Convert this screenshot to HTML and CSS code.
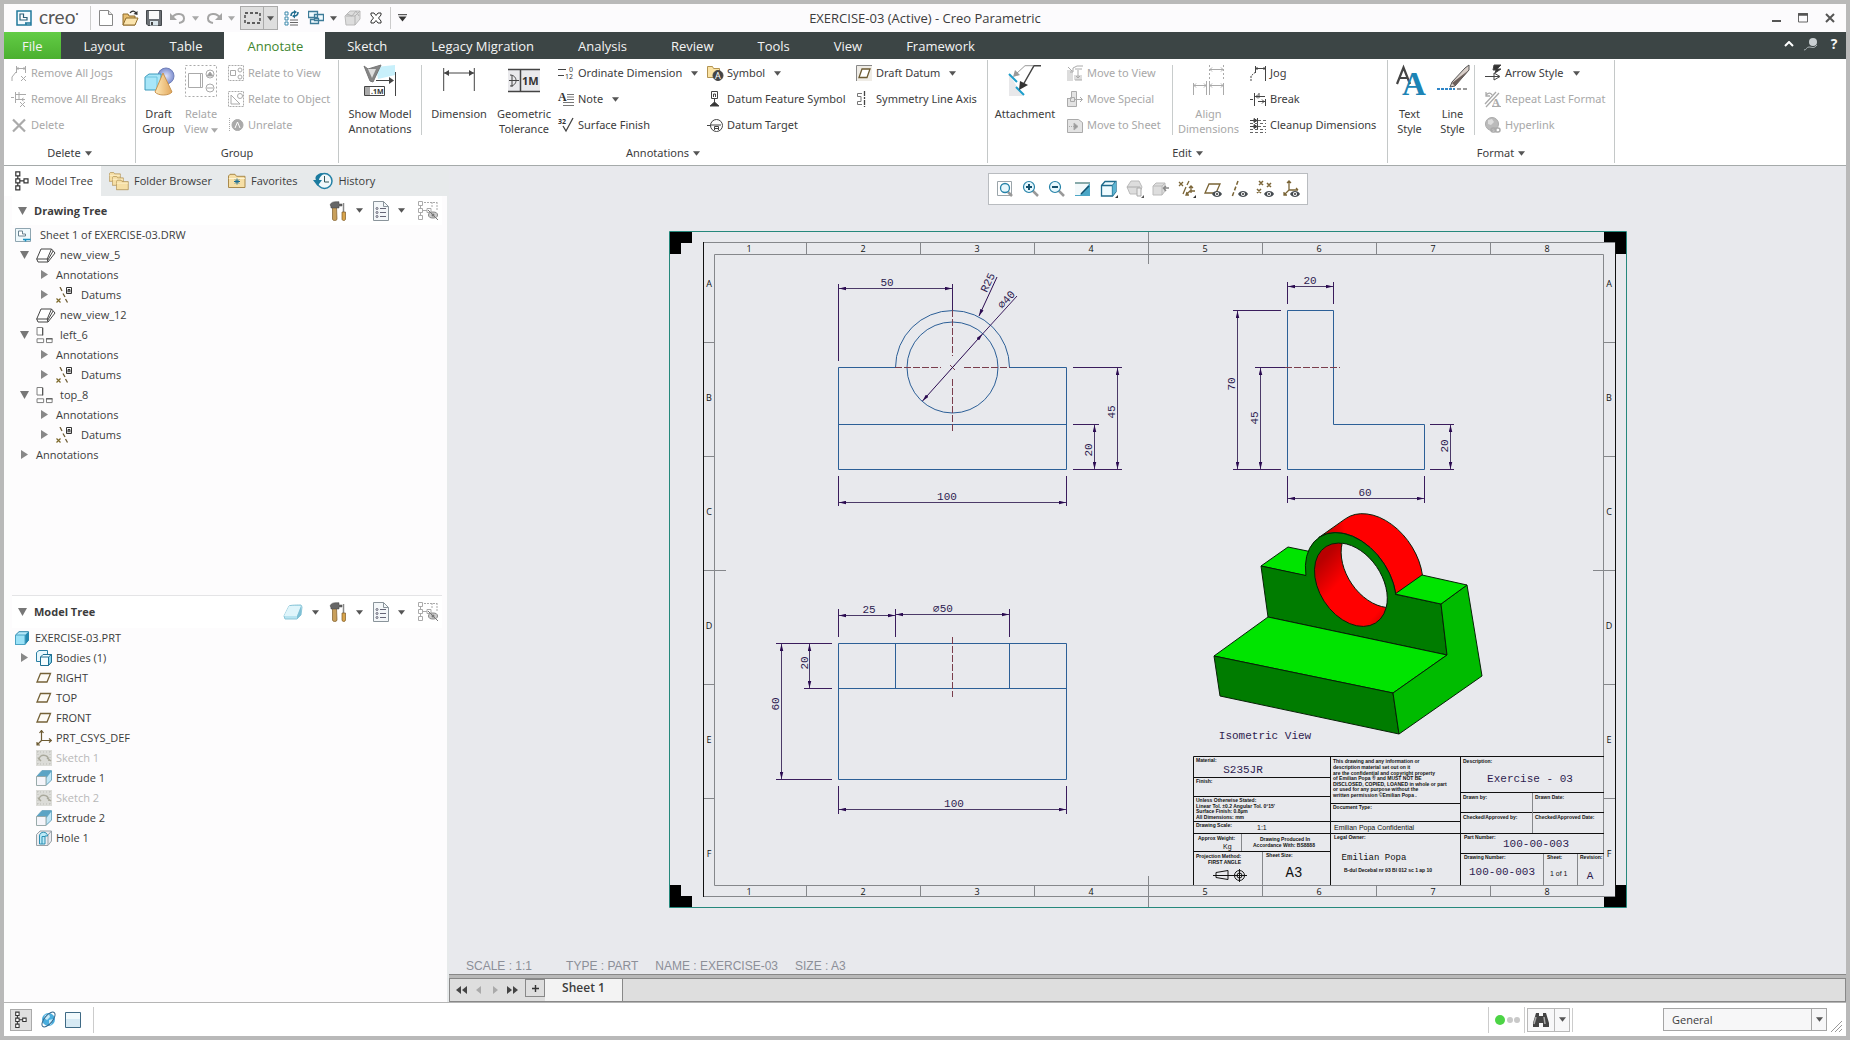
FILE: index.html
```html
<!DOCTYPE html>
<html lang="en">
<head>
    <meta charset="UTF-8">
    <title>EXERCISE-03 (Active) - Creo Parametric</title>
    <link rel="stylesheet" href="styles.css">
</head>
<body>
    <!-- shared icons -->
    <svg class="sprite" aria-hidden="true">
        <symbol id="caret" viewBox="0 0 8 5"><path d="M0 0h8L4 5z" fill="currentColor"/></symbol>
        <symbol id="tri-down" viewBox="0 0 10 8"><path d="M0 0h9L4.5 8z" fill="#777"/></symbol>
        <symbol id="tri-right" viewBox="0 0 10 10"><path d="M1 0v9l7-4.500z" fill="#888"/></symbol>
        <symbol id="sheet" viewBox="0 0 16 14"><path d="M.5.5h15v13H.5z" fill="#eef8fc" stroke="#8fa5b0"/><path d="M3.500 3v5h7V6h-3V3z" fill="#fff" stroke="#6a8290"/><path d="M8 11.500h7.500M10.500 11.500v2" stroke="#1b90c0" stroke-width="1.500"/></symbol>
        <symbol id="view3d" viewBox="0 0 20 16"><path d="M.7 11.500 5 1.500h10.500l3.500 4-7 9H2z" fill="#fff" stroke="#444" stroke-linejoin="round"/><path d="M.7 11.500h10.500l4.300-10M11.200 11.500l.8 3M11.600 13l5.500-9.500" fill="none" stroke="#444"/></symbol>
        <symbol id="view2d" viewBox="0 0 20 18"><path d="M.5.5h6v8h-6zM.5 12.500h7v4h-7zM10.500 12.500h6v4h-6z" fill="#fff" stroke="#777"/><path d="M6.500 1v8M10 12.500h7" stroke="#444"/></symbol>
        <symbol id="datums" viewBox="0 0 16 16"><path d="M4 0l2 4M7 6.500 9 10M9.500 12l2 3.500" stroke="#6d5b33" stroke-width="1.300"/><path d="M.5 11.500l4 4m0-4-4 4" stroke="#7d6a2c" stroke-width="1.200"/><path d="M10.500.5h5v6h-5zM12 5.500v-3h2v3M12 4h2" fill="#fff" stroke="#333"/></symbol>
        <symbol id="plane" viewBox="0 0 16 12"><path d="M4.500 1.500h10l-3.500 8.500H1z" fill="#fdfbf7" stroke="#756238" stroke-width="1.300"/></symbol>
        <symbol id="csys" viewBox="0 0 16 16"><path d="M5.500 1v9.500H15M5.500 10.500l-4 4M3.500 3l2-2.500 2 2.500M13 8.500l2.500 2-2.500 2M1 12v3h3" fill="none" stroke="#6d5b33" stroke-width="1.200"/></symbol>
        <symbol id="sketch" viewBox="0 0 16 16"><path d="M0 0h16v16H0z" fill="#dcdcd8"/><path d="M1 2h14M1 14h14M2 1v14M14 1v14" stroke="#bdbdb8" stroke-dasharray="1 2"/><path d="M3 10c0-6 9-7 10 1M2 8l3 3M11 8l4 3" fill="none" stroke="#aaa99c" stroke-width="1.500"/></symbol>
        <symbol id="extrude" viewBox="0 0 16 16"><path d="M.5 6.500 6 .5h9.500v9.500L10 15.500z" fill="#d3eefa" stroke="#8fb3c4"/><path d="M.5 6.500 6 .5h9.500L10 6.500zM10 6.500 15.500.5V4L10 10z" fill="#5ba4c5"/><path d="M10 8 15.500 1v9L10 15z" fill="#bfe6f6" stroke="#5a9dbb" stroke-width=".6"/><path d="M.5 6.500H10v9H.5z" fill="#f5f5fa" stroke="#9aa"/></symbol>
        <symbol id="hole" viewBox="0 0 16 16"><path d="M.5 4.500 4 1h11.500v10L12 15.500H.5z" fill="#ececf0" stroke="#99a2a8"/><path d="M12 15V5l3.500-4" fill="none" stroke="#99a2a8"/><path d="M3.500 14V6c0-5 8-5 8 0H9v8zM6 14V6.500h3" fill="#bdeaf7" stroke="#2a8fb3"/></symbol>
        <symbol id="part" viewBox="0 0 16 16"><path d="M.5 5 4 1.700h9.500v8.500L10 14.500H.5z" fill="#b5e9fa" stroke="#2d87ab"/><path d="M10 5l3.500-3.300v8.500L10 14.500z" fill="#2589b0"/><path d="M.5 5H10v9.500H.5z" fill="#9be2f8" stroke="#4ba3c4"/></symbol>
        <symbol id="bodies" viewBox="0 0 16 16"><path d="M.5 2.500 3 .5h8.500v8L9 11.500H.5z" fill="#e7f7fd" stroke="#2b7fa3"/><path d="M4.500 7 7 4.500h8.500V12l-3 3.500h-8z" fill="#f4fcff" stroke="#1d6f93"/><path d="M12.500 7l3-2.500V12l-3 3.500z" fill="#8dd6ee" stroke="#1d6f93"/><path d="M4.500 7h8" stroke="#1d6f93"/></symbol>
        <symbol id="tools" viewBox="0 0 18 20"><path d="M3.500 6h4l.5 12c0 2-4.500 2-4.500 0z" fill="#c9a05c" stroke="#7b5a2a" stroke-width=".7"/><path d="M1 4C2 1 5 .5 8 .7h2V3h3v2h-3v2H2c0-2-.5-2.500-1-3z" fill="#666" stroke="#444" stroke-width=".5"/><path d="M14.500 2v9" stroke="#888" stroke-width="1.500"/><path d="M13 11h3.500v7c0 2-3.500 2-3.500 0z" fill="#d8a44a" stroke="#7b5a2a" stroke-width=".7"/></symbol>
        <symbol id="listdoc" viewBox="0 0 16 20"><path d="M.5.5h10l5 5v14H.5z" fill="#f4f7f9" stroke="#8a949b"/><path d="M10.500.5v5h5" fill="none" stroke="#8a949b"/><path d="M7 7.500h6M7 11.500h6M7 15.500h6" stroke="#667"/><g fill="none" stroke="#667"><circle cx="4" cy="7.500" r="1"/><circle cx="4" cy="11.500" r="1"/><circle cx="4" cy="15.500" r="1"/></g></symbol>
        <symbol id="treehide" viewBox="0 0 20 20"><g fill="none" stroke="#aaa"><path d="M.5.5h4v4h-4zM.5 7.500h4v4h-4zM.5 14.500h4v4h-4zM2.500 5v2M2.500 12v2M5 9.500h4M9 7.500h4v4H9z"/><path d="M6 1.500h13M19 1v9M14 1v6" stroke-dasharray="2 1"/></g><ellipse cx="15" cy="14" rx="4.500" ry="3" fill="#ccc" stroke="#888"/><circle cx="15" cy="14" r="1.500" fill="#777"/><path d="M10 9l10 10" stroke="#777"/></symbol>
        <symbol id="treeicon" viewBox="0 0 14 20"><path d="M.8.800h4v4h-4zM.8 7.800h4v4h-4zM.8 14.800h4v4h-4zM9 7.800h4v4H9zM2.800 5v3M2.800 12v3M5 9.800h4" fill="#fff" stroke="#333" stroke-width="1.200"/></symbol>
        <symbol id="folder" viewBox="0 0 18 15"><path d="M.5 14V2.500L2 .8h5l1.500 2h8.500V14z" fill="#f6dfa5" stroke="#a98a4c"/><path d="M.8 5h16" stroke="#fff4d3"/></symbol>
        <symbol id="eye" viewBox="0 0 10 6"><path d="M0 3c2-4 8-4 10 0-2 4-8 4-10 0z" fill="#454b50"/><circle cx="5" cy="3" r="2" fill="#fff"/><circle cx="5" cy="3" r="1" fill="#333"/></symbol>
    </svg>

    <div class="window">
        <header class="titlebar">
            <div class="brand">
                <svg width="16" height="16" viewBox="0 0 16 16"><path d="M1 1h14v14H1z" fill="#f4fbff" stroke="#217a9c" stroke-width="1.500"/><path d="M4 4v6h7V7.500H7.500V4z" fill="#fff" stroke="#2b5f78" stroke-width="1.200"/><path d="M9 13h6M10 13v2" stroke="#217a9c" stroke-width="1.500"/></svg>
                <span>creo<sup>•</sup></span>
            </div>
            <div class="quick">
                <button aria-label="New"><svg width="14" height="16" viewBox="0 0 14 16"><path d="M.5.5h9l4 4v11H.5z" fill="#fff" stroke="#888"/><path d="M9.500.5v4h4" fill="#e5e5e5" stroke="#888"/></svg></button>
                <button aria-label="Open"><svg width="17" height="16" viewBox="0 0 17 16"><path d="M1 15V4h5l1 2h6v9z" fill="#e8bf72" stroke="#8f6d2d"/><path d="M1 15l3-7h12l-3 7z" fill="#fbe4ae" stroke="#8f6d2d"/><path d="M8 3c2-3 5-2 6 0" fill="none" stroke="#333" stroke-width="1.300"/><path d="M15.500 1v4l-4-1z" fill="#333"/></svg></button>
                <button aria-label="Save"><svg width="16" height="16" viewBox="0 0 16 16"><path d="M.5.5h15v15H2l-1.500-1.500z" fill="#6c7075" stroke="#44484c"/><path d="M3 1h10v8H3z" fill="#fafafa"/><path d="M4 11h8v4.500H4z" fill="#dbe6ec"/><path d="M5 12h2v3H5z" fill="#444"/></svg></button>
                <div class="split"><button aria-label="Undo" disabled><svg width="16" height="12" viewBox="0 0 16 12"><path d="M2 6C5 0 14 1 14 6.500 14 9 12 10.500 9 11" fill="none" stroke="#a5a5a5" stroke-width="2"/><path d="M0 1v7h7z" fill="#a5a5a5"/></svg></button><button class="drop" aria-label="Undo list" disabled><svg class="caret"><use href="#caret"/></svg></button></div>
                <div class="split"><button aria-label="Redo" disabled><svg width="16" height="12" viewBox="0 0 16 12"><path d="M14 6C11 0 2 1 2 6.500 2 9 4 10.500 7 11" fill="none" stroke="#a5a5a5" stroke-width="2"/><path d="M16 1v7H9z" fill="#a5a5a5"/></svg></button><button class="drop" aria-label="Redo list" disabled><svg class="caret"><use href="#caret"/></svg></button></div>
                <div class="picker"><button aria-label="Select box"><svg width="17" height="12" viewBox="0 0 17 12"><path d="M1 1h15v10H1z" fill="none" stroke="#333" stroke-width="1.300" stroke-dasharray="3 2"/></svg></button><button class="drop" aria-label="Selection mode"><svg class="caret"><use href="#caret"/></svg></button></div>
                <button aria-label="Regenerate"><svg width="16" height="16" viewBox="0 0 16 16"><path d="M1 2h3v3H1zM1 7h3v3H1zM1 12h3v3H1z" fill="#fff" stroke="#3b88ab"/><path d="M6 12.500h8M6 15h8M6 10h8" stroke="#666"/><path d="M7 6c0-3 2-4 4-4M14 2c0 3-1 4-4 4" fill="none" stroke="#216e90" stroke-width="1.600"/><path d="M10 0l3 2-3 2.500zM11 4l-3 2 3 2.500z" fill="#216e90"/></svg></button>
                <div class="split"><button aria-label="Windows"><svg width="16" height="16" viewBox="0 0 16 16"><path d="M.5 1.500h9v6h-9zM6.500 8.500h4v5h-8v-4h4M6.500 4.500h9v6h-9z" fill="#f0fbff" stroke="#3d7b98" stroke-width="1.300"/></svg></button><button class="drop" aria-label="Window list"><svg class="caret"><use href="#caret"/></svg></button></div>
                <button aria-label="Model display" disabled><svg width="17" height="16" viewBox="0 0 17 16"><path d="M1 6 6 1h10v8l-5 6H2z" fill="#ddd" stroke="#bbb"/><path d="M2 6h9v9M11 6l5-5M3 4l5 2 4-5 3 5" fill="none" stroke="#b3b3b3"/></svg></button>
                <button aria-label="Close window"><svg width="12" height="12" viewBox="0 0 12 12"><path d="M1 1h3l2 2.500L8 1h3v2L8.500 6 11 9v2H8L6 8.500 4 11H1V9l2.500-3L1 3z" fill="#fff" stroke="#333"/></svg></button>
                <button class="customize" aria-label="Customize toolbar"><svg width="9" height="8" viewBox="0 0 9 8"><path d="M0 .7h9" stroke="#333"/><path d="M.5 2.500h8l-4 5z" fill="#333"/></svg></button>
            </div>
            <h1>EXERCISE-03 (Active) - Creo Parametric</h1>
            <div class="window-buttons">
                <button aria-label="Minimize"><svg width="10" height="10" viewBox="0 0 10 10"><path d="M1 8h9" stroke="#555" stroke-width="2"/></svg></button>
                <button aria-label="Maximize"><svg width="10" height="10" viewBox="0 0 10 10"><path d="M.5.5h9v8.500h-9z" fill="none" stroke="#666"/><path d="M0 1.500h10" stroke="#555" stroke-width="2.500"/></svg></button>
                <button aria-label="Close"><svg width="10" height="10" viewBox="0 0 10 10"><path d="M1 1l8 8M9 1 1 9" stroke="#555" stroke-width="2"/></svg></button>
            </div>
        </header>

        <nav class="tabs">
            <button class="file">File</button>
            <button>Layout</button>
            <button>Table</button>
            <button class="active">Annotate</button>
            <button>Sketch</button>
            <button>Legacy Migration</button>
            <button>Analysis</button>
            <button>Review</button>
            <button>Tools</button>
            <button>View</button>
            <button>Framework</button>
            <div class="tab-tools">
                <button aria-label="Collapse ribbon"><svg width="10" height="6" viewBox="0 0 10 6"><path d="M1 5l4-4 4 4" fill="none" stroke="#fff" stroke-width="2"/></svg></button>
                <button aria-label="Search commands"><svg width="14" height="14" viewBox="0 0 14 14"><circle cx="9" cy="5" r="4" fill="#c9cfd2"/><path d="M0 13c3 0 2-3 5-3s5 2 8-2" fill="none" stroke="#aab2b5"/></svg></button>
                <button aria-label="Help"><b>?</b></button>
            </div>
        </nav>

        <section class="ribbon">
            <div class="group group-delete">
                <div class="group-body">
                    <div class="stack">
                        <button disabled><svg viewBox="0 0 16 16"><path d="M5.500 1v7M14.500 1v7M6 3.500h8M7.500 2 6 3.500 7.500 5M12.500 2 14 3.500 12.500 5M5 7l-4 5v4M10 11l5 5m0-5-5 5"/></svg>Remove All Jogs</button>
                        <button disabled><svg viewBox="0 0 16 16"><path d="M0 6.500h3M4.500 1v11M8 1v8M5 3.500h10M5 8.500h9M12.500 7l-2 1.500 2 1.500M9 11l5 5m0-5-5 5"/></svg>Remove All Breaks</button>
                        <button disabled><svg viewBox="0 0 16 16"><path d="M2 2.500l12 12M14 2.500l-12 12" stroke-width="2.200"/></svg>Delete</button>
                    </div>
                </div>
                <button class="group-name">Delete<svg class="caret"><use href="#caret"/></svg></button>
            </div>

            <div class="group group-group">
                <div class="group-body">
                    <button class="big"><svg viewBox="0 0 32 32"><defs><linearGradient id="cone"><stop offset="0" stop-color="#ffe9b8"/><stop offset="1" stop-color="#e2a75b"/></linearGradient><radialGradient id="ball"><stop offset="0" stop-color="#dfe3fa"/><stop offset="1" stop-color="#7e8fd0"/></radialGradient></defs><circle cx="23" cy="11" r="8" fill="url(#ball)" stroke="#7180b8"/><path d="M2 12l4-3h12v12l-4 4H2z" fill="#a8e6f8" stroke="#3c9abb"/><path d="M2 12h12v13" fill="none" stroke="#6cc4de"/><path d="M20 8l9 19c-3 4-14 4-17 0z" fill="url(#cone)" stroke="#c89450"/></svg><span>Draft</span><span>Group</span></button>
                    <button class="big" disabled><svg viewBox="0 0 32 32"><path d="M.5.5h31v31H.5z" stroke-dasharray="2 2"/><path d="M3.500 8.500h14v14h-14zM15.500 8v14"/><circle cx="25" cy="9" r="4"/><path d="M22 11l3-4 3 4z" fill="#999"/><circle cx="25" cy="23" r="4"/><path d="M22 23h6"/></svg><span>Relate</span><span>View <svg class="caret"><use href="#caret"/></svg></span></button>
                    <div class="stack">
                        <button disabled><svg viewBox="0 0 16 16"><path d="M.5.5h15v15H.5z" stroke-dasharray="2 1"/><path d="M2.500 5.500h5v5h-5z"/><circle cx="12" cy="5" r="2"/><circle cx="12" cy="12" r="2"/></svg>Relate to View</button>
                        <button disabled><svg viewBox="0 0 16 16"><path d="M.5.5h15v15H.5z" stroke-dasharray="2 1"/><path d="M3 4v9h9z"/><circle cx="12" cy="5" r="2.500"/></svg>Relate to Object</button>
                        <button disabled><svg viewBox="0 0 16 16"><path d="M1.500 1v14" stroke-dasharray="1 1"/><circle cx="9.500" cy="8" r="5.500" fill="#aaa"/><path d="M7 11l2.500-6L12 11" stroke="#fff"/></svg>Unrelate</button>
                    </div>
                </div>
                <div class="group-name">Group</div>
            </div>

            <div class="group group-annotations">
                <div class="group-body">
                    <button class="big"><svg viewBox="0 0 32 32"><path d="M12 2l19-2v10L14 14z" fill="#c8f0fb" stroke="none"/><path d="M0 1l4 3 13-4-8 17-3-1z" fill="#858585" stroke="#777"/><path d="M4 4h8l-4 9z" fill="#ddd" stroke="none"/><path d="M12 15.500h17M31.500 7v24"/><path d="M25 12l5 3.500-5 3.500z" fill="#444" stroke="none"/><path d="M.5 21.500h20v9H.5z" fill="#fff"/><path d="M1 22h5v8H1z" fill="#aaa" stroke="none"/><text x="7" y="29" font-size="7" font-weight="bold">.1M</text></svg><span>Show Model</span><span>Annotations</span></button>
                    <button class="big divided"><svg viewBox="0 0 32 32"><path d="M.7 3v23M31.300 3v23M1 8h30"/><path d="M1 8l5-3v6zM31 8l-5-3v6z" fill="#444" stroke="none"/></svg><span>Dimension</span></button>
                    <button class="big"><svg viewBox="0 0 32 32"><path d="M0 5h32v21H0z" fill="#e9e9ec" stroke="none"/><path d="M0 4.500h32M0 26.500h32M12.500 5v21" stroke-width="1.500"/><path d="M1 15.500h10M4 10v12M2 10c8 0 8 11 0 11"/><text x="14" y="20" font-size="11" font-weight="bold">1M</text></svg><span>Geometric</span><span>Tolerance</span></button>
                    <div class="stack">
                        <button><svg viewBox="0 0 16 16"><path d="M0 4.500h8M0 10.500h6"/><text x="11" y="7" font-size="7">0</text><text x="7" y="14" font-size="7">12</text></svg>Ordinate Dimension<svg class="caret"><use href="#caret"/></svg></button>
                        <button><svg viewBox="0 0 16 16"><text class="serif" x="0" y="10" font-size="12" font-weight="bold">A</text><path d="M9 3.500h7M9 6h7M9 8.500h7M5 11.500h11M5 14.500h11" stroke="#777"/></svg>Note<svg class="caret"><use href="#caret"/></svg></button>
                        <button><svg viewBox="0 0 16 16"><text x="0" y="7" font-size="7" font-weight="bold">32</text><path d="M5 9l3 5 7-13" stroke-width="1.300"/></svg>Surface Finish</button>
                    </div>
                    <div class="stack">
                        <button><svg viewBox="0 0 16 16"><path d="M.5 1.500h5l1 2h6v9H.5z" fill="#fbe3a4" stroke="#b39452"/><circle cx="11" cy="10.500" r="5" fill="#444"/><text class="white" x="8" y="14" font-size="9">A</text></svg>Symbol<svg class="caret"><use href="#caret"/></svg></button>
                        <button><svg viewBox="0 0 16 16"><path d="M4.500.5h6v7h-6zM7.500 8v4M6.500 6V3h2v3"/><path d="M3 15l4.500-4 4.500 4z" fill="#333"/></svg>Datum Feature Symbol</button>
                        <button><svg viewBox="0 0 16 16"><path d="M0 8.500h4M4 8h10"/><circle cx="9.500" cy="8.500" r="6"/><path d="M7.500 13V9.500h4V13M7.500 11.500h4"/></svg>Datum Target</button>
                    </div>
                    <div class="stack">
                        <button><svg viewBox="0 0 16 16"><path d="M1 1h15v15H1z" fill="#efece6" stroke="none"/><path d="M.5 16V.5H16" stroke="#888"/><path d="M6 4h8l-3 8.500H3z" fill="#fff" stroke="#6d5b33" stroke-width="1.300"/></svg>Draft Datum<svg class="caret"><use href="#caret"/></svg></button>
                        <button><svg viewBox="0 0 16 16"><path d="M8.500 0v16" stroke-dasharray="5 1 2 1" stroke-width="1.300"/><path d="M6 2.500H1.500v3H5v5H1.500v3H6" stroke="#777"/></svg>Symmetry Line Axis</button>
                    </div>
                </div>
                <button class="group-name">Annotations<svg class="caret"><use href="#caret"/></svg></button>
            </div>

            <div class="group group-edit">
                <div class="group-body">
                    <button class="big"><svg viewBox="0 0 32 32"><path d="M0 9l14 22H0z" fill="#e8e8ea" stroke="none"/><path d="M0 9l8 8M7 22l8 8" stroke="#1e9ecb" stroke-width="2"/><path d="M24 .7h-8L7 9" stroke="#999"/><path d="M4 12l2-7 5 5z" fill="#999" stroke="none"/><path d="M32 .7h-7L14 20" stroke-width="1.500"/><path d="M10 25l1-9 8 4z" fill="#333" stroke="none"/></svg><span>Attachment</span></button>
                    <div class="stack">
                        <button disabled><svg viewBox="0 0 16 16"><path d="M0 5h6v11H0zM7 10h8v5H7z" fill="#ddd" stroke="none"/><path d="M1 2l4 4M3 7h3V3l4-2h6M8 4h7M8 15h7M11 5v8M9 11l2 2 2-2"/></svg>Move to View</button>
                        <button disabled><svg viewBox="0 0 16 16"><path d="M.5 7.500h4M.5 7v8.500h9V.5h-5v7" fill="#e3e3e3"/><path d="M3.500 6.500h4v4h-4zM8 8.500h7M13 6l2.500 2.500L13 11"/></svg>Move Special</button>
                        <button disabled><svg viewBox="0 0 16 16"><path d="M.5 2.500h11l4 3v10H.5z" fill="#e3e3e3"/><path d="M0 9.500h9" stroke-dasharray="1 1"/><path d="M7 6l4 3.500L7 13z" fill="#999"/></svg>Move to Sheet</button>
                    </div>
                    <button class="big divided" disabled><svg viewBox="0 0 32 32"><path d="M.5 18v12M13.500 16v14M16.500 16v14M30.500 18v12M1 20.500h12M17 20.500h13M17 4.500h13M3 18.500l-2 2 2 2M11 18.500l2 2-2 2M19 18.500l-2 2 2 2M28 18.500l2 2-2 2M19 2.500l-2 2 2 2M28 2.500l2 2-2 2"/><path d="M16.500 0v14M30.500 0v14" stroke-dasharray="2 2"/></svg><span>Align</span><span>Dimensions</span></button>
                    <div class="stack">
                        <button><svg viewBox="0 0 16 16"><path d="M5.500 1v7M15.500 1v15M6 3.500h9M7.500 2 6 3.500 7.500 5M13.500 2 15 3.500 13.500 5"/><path d="M5.500 7 1 11v5" stroke-dasharray="2 1"/></svg>Jog</button>
                        <button><svg viewBox="0 0 16 16"><path d="M0 8.500h3M4.500 2v13M9 2v5M15.500 8v7M5 5.500h10M8 10.500h7M8 3.500 6 5.500 8 7.500M12 8.500l2 2-2 2"/></svg>Break</button>
                        <button><svg viewBox="0 0 16 16"><path d="M0 3.500h7M0 9.500h7M7.500 1v5M7.500 7v5"/><path d="M4 1.500v4l3-2zM4 7.500v4l3-2z" fill="#444"/><path d="M8 3.500h8M8 9.500h8M0 12.500h16M0 15.500h16M0 6.500h16" stroke-dasharray="3 2" stroke="#666"/></svg>Cleanup Dimensions</button>
                    </div>
                </div>
                <button class="group-name">Edit<svg class="caret"><use href="#caret"/></svg></button>
            </div>

            <div class="group group-format">
                <div class="group-body">
                    <button class="big"><svg viewBox="0 0 32 32"><path d="M3 19 9.500 2.500 16 19M5 13h9" stroke-width="2.200"/><text class="serif blue" x="8" y="30" font-size="33" font-weight="bold">A</text></svg><span>Text</span><span>Style</span></button>
                    <button class="big"><svg viewBox="0 0 32 32"><path d="M32 0v5L18 21l-5 1 2-5L28 3z" fill="#d9cfc9" stroke="#555"/><path d="M32 5 18 21l-3-3z" fill="#6b5f5b" stroke="none"/><path d="M0 24h18" stroke="#2f86c8" stroke-width="2" stroke-dasharray="3 1"/><path d="M20 24h12" stroke="#999" stroke-width="2" stroke-dasharray="4 2"/></svg><span>Line</span><span>Style</span></button>
                    <div class="stack divided">
                        <button><svg viewBox="0 0 16 16"><path d="M0 11.500h14M9 0h7l-4 4h4l-6 4 1-3H8z" fill="#333"/><path d="M9 8l6 3.500L9 15z" fill="none"/></svg>Arrow Style<svg class="caret"><use href="#caret"/></svg></button>
                        <button disabled><svg viewBox="0 0 16 16"><path d="M0 13 11 1M1 16 14 2M1 1v4h4M1 4c3-3 5-2 6 0" stroke-width="1.300"/><text class="serif" x="7" y="15" font-size="11" font-weight="bold">A</text><path d="M7 15.500h9"/></svg>Repeat Last Format</button>
                        <button disabled><svg viewBox="0 0 16 16"><circle cx="7" cy="7" r="6.500" fill="#bbb"/><path d="M3 3l4-1 2 3-3 3-3-1z" fill="#ddd" stroke="none"/><rect x="6" y="11" width="5" height="4" rx="2" stroke-width="1.500"/><rect x="10" y="11" width="5" height="4" rx="2" stroke-width="1.500"/></svg>Hyperlink</button>
                    </div>
                </div>
                <button class="group-name">Format<svg class="caret"><use href="#caret"/></svg></button>
            </div>
        </section>

        <main class="workspace">
            <aside class="side">
                <nav class="side-tabs">
                    <button class="active"><svg width="14" height="20"><use href="#treeicon"/></svg>Model Tree</button>
                    <button><svg width="20" height="20" viewBox="0 0 20 20"><use href="#folder" x="0" y="0" width="12" height="12"/><use href="#folder" x="3" y="4" width="12" height="12"/><use href="#folder" x="7" y="8" width="13" height="12"/></svg>Folder Browser</button>
                    <button><svg width="18" height="16" viewBox="0 0 18 16"><use href="#folder" width="18" height="16"/><path d="M9 5.500v6M6 8.500h6M7 6.500l4 4M11 6.500l-4 4" stroke="#1b6c90"/></svg>Favorites</button>
                    <button><svg width="20" height="18" viewBox="0 0 20 18"><circle cx="11.500" cy="9" r="7.500" fill="#f1f8fb" stroke="#2380a5" stroke-width="1.500"/><path d="M8 1C2 3 2 6 3 8L0 8l4.500 6L9 8H6c0-2 2-4 4-6z" fill="#1b7b9f"/><path d="M11.500 4v6H16" fill="none" stroke="#355"/></svg>History</button>
                </nav>

                <section class="pane">
                    <div class="pane-head">
                        <svg width="10" height="8"><use href="#tri-down"/></svg>
                        <h2>Drawing Tree</h2>
                        <button aria-label="Tree settings"><svg width="18" height="20"><use href="#tools"/></svg><svg class="caret"><use href="#caret"/></svg></button>
                        <button aria-label="Tree display"><svg width="16" height="20"><use href="#listdoc"/></svg><svg class="caret"><use href="#caret"/></svg></button>
                        <button aria-label="Tree columns" disabled><svg width="20" height="20"><use href="#treehide"/></svg></button>
                    </div>
                    <ul class="tree">
                        <li><svg class="ico roomy"><use href="#sheet"/></svg>Sheet 1 of EXERCISE-03.DRW</li>
                        <li><i><svg width="10" height="8"><use href="#tri-down"/></svg></i><svg class="ico wide"><use href="#view3d"/></svg>new_view_5</li>
                        <li class="deep"><i><svg width="10" height="10"><use href="#tri-right"/></svg></i>Annotations</li>
                        <li class="deep"><i><svg width="10" height="10"><use href="#tri-right"/></svg></i><svg class="ico roomy"><use href="#datums"/></svg>Datums</li>
                        <li><i></i><svg class="ico wide"><use href="#view3d"/></svg>new_view_12</li>
                        <li><i><svg width="10" height="8"><use href="#tri-down"/></svg></i><svg class="ico wide"><use href="#view2d"/></svg>left_6</li>
                        <li class="deep"><i><svg width="10" height="10"><use href="#tri-right"/></svg></i>Annotations</li>
                        <li class="deep"><i><svg width="10" height="10"><use href="#tri-right"/></svg></i><svg class="ico roomy"><use href="#datums"/></svg>Datums</li>
                        <li><i><svg width="10" height="8"><use href="#tri-down"/></svg></i><svg class="ico wide"><use href="#view2d"/></svg>top_8</li>
                        <li class="deep"><i><svg width="10" height="10"><use href="#tri-right"/></svg></i>Annotations</li>
                        <li class="deep"><i><svg width="10" height="10"><use href="#tri-right"/></svg></i><svg class="ico roomy"><use href="#datums"/></svg>Datums</li>
                        <li><i><svg width="10" height="10"><use href="#tri-right"/></svg></i>Annotations</li>
                    </ul>
                </section>

                <section class="pane">
                    <div class="pane-head">
                        <svg width="10" height="8"><use href="#tri-down"/></svg>
                        <h2>Model Tree</h2>
                        <button aria-label="Body display"><svg width="20" height="16" viewBox="0 0 20 16"><path d="M1 12 6 2c1-1 10-1 12-1l1 2-1 8-4 4H2z" fill="#b6e3f0" stroke="#8cc6d8"/><path d="M1 12 6 2h12l-4 10z" fill="#dff5fb"/><path d="M14 12l4-10v9l-4 4z" fill="#7fc0d5"/></svg><svg class="caret"><use href="#caret"/></svg></button>
                        <button aria-label="Tree settings"><svg width="18" height="20"><use href="#tools"/></svg><svg class="caret"><use href="#caret"/></svg></button>
                        <button aria-label="Tree display"><svg width="16" height="20"><use href="#listdoc"/></svg><svg class="caret"><use href="#caret"/></svg></button>
                        <button aria-label="Tree columns" disabled><svg width="20" height="20"><use href="#treehide"/></svg></button>
                    </div>
                    <ul class="tree">
                        <li><svg class="ico"><use href="#part"/></svg>EXERCISE-03.PRT</li>
                        <li><i><svg width="10" height="10"><use href="#tri-right"/></svg></i><svg class="ico"><use href="#bodies"/></svg>Bodies (1)</li>
                        <li><i></i><svg class="ico"><use href="#plane"/></svg>RIGHT</li>
                        <li><i></i><svg class="ico"><use href="#plane"/></svg>TOP</li>
                        <li><i></i><svg class="ico"><use href="#plane"/></svg>FRONT</li>
                        <li><i></i><svg class="ico"><use href="#csys"/></svg>PRT_CSYS_DEF</li>
                        <li class="hidden-item"><i></i><svg class="ico"><use href="#sketch"/></svg>Sketch 1</li>
                        <li><i></i><svg class="ico"><use href="#extrude"/></svg>Extrude 1</li>
                        <li class="hidden-item"><i></i><svg class="ico"><use href="#sketch"/></svg>Sketch 2</li>
                        <li><i></i><svg class="ico"><use href="#extrude"/></svg>Extrude 2</li>
                        <li><i></i><svg class="ico"><use href="#hole"/></svg>Hole 1</li>
                    </ul>
                </section>
            </aside>

            <div class="stage">
                <div class="canvas">
                    <div class="view-tools">
                        <button aria-label="Refit"><svg viewBox="0 0 18 18"><path d="M1.500 1.500h14v14h-14z" fill="#fff" stroke="#9ba5aa"/><path d="M12 12l4 4" stroke="#999" stroke-width="2.500"/><circle cx="9" cy="8" r="4.500" fill="#e6f7fd" stroke="#2582a8" stroke-width="1.300"/></svg></button>
                        <button aria-label="Zoom in"><svg viewBox="0 0 18 18"><path d="M10 10l6 6" stroke="#999" stroke-width="2.500"/><circle cx="7" cy="7" r="5.500" fill="#e6f7fd" stroke="#2582a8" stroke-width="1.200"/><path d="M4 7h6M7 4v6" stroke="#14506d" stroke-width="2"/></svg></button>
                        <button aria-label="Zoom out"><svg viewBox="0 0 18 18"><path d="M10 10l6 6" stroke="#999" stroke-width="2.500"/><circle cx="7" cy="7" r="5.500" fill="#e6f7fd" stroke="#2582a8" stroke-width="1.200"/><path d="M4 7h6" stroke="#14506d" stroke-width="2"/></svg></button>
                        <button aria-label="Repaint"><svg viewBox="0 0 18 18"><path d="M1 2h15v14H1z" fill="#4ba6c6"/><path d="M1 4h14L6 15H1z" fill="#f3f9fb"/><path d="M1 2h15v2H1z" fill="#8aa"/><path d="M15 6 7 14" stroke="#14506d" stroke-width="1.500"/></svg></button>
                        <button aria-label="Display style"><svg viewBox="0 0 18 18"><path d="M1.500 5.500 5 1.500h11v10L12.500 16H1.500zM1.500 5.500h11V16M12.500 5.500l3.500-4" fill="#effbff" stroke="#1f6b8c" stroke-width="1.300"/><path d="M12.500 5.500l3.500-4v10L12.500 16z" fill="#5db4d2"/><path d="M18 18h-3l3-3z" fill="#333"/></svg></button>
                        <button aria-label="Saved views" disabled><svg viewBox="0 0 18 18"><path d="M1 7l4-6h8l3 6-3 7H4z" fill="#ddd" stroke="#bbb"/><path d="M1 7h13M11 8h4v8h-4z" fill="#eee" stroke="#aaa"/><path d="M18 18h-3l3-3z" fill="#555"/></svg></button>
                        <button aria-label="Section" disabled><svg viewBox="0 0 18 18"><path d="M1 6l3-3h9v8l-3 4H1z" fill="#ddd" stroke="#bbb"/><path d="M1 6h9v9M10 6l3-3" fill="none" stroke="#bbb"/><path d="M17 8h-5M14 6l-2.500 2L14 11" fill="none" stroke="#888" stroke-width="1.500"/></svg></button>
                        <button aria-label="Datum display"><svg viewBox="0 0 18 18"><path d="M1 2l4 4m0-4-4 4M11 1 9 5M8 7l-3 7M13 7v6M8 15l4-4h5M11 8l2-2 2 2M9 12l-1 3 3 0" fill="none" stroke="#7a6436" stroke-width="1.300"/><path d="M18 18h-3l3-3z" fill="#333"/></svg></button>
                        <button aria-label="Plane display"><svg viewBox="0 0 18 18"><path d="M5 4h11l-4 9H1z" fill="none" stroke="#7a6436" stroke-width="1.300"/><use href="#eye" x="8" y="11" width="10" height="6"/></svg></button>
                        <button aria-label="Axis display"><svg viewBox="0 0 18 18"><path d="M8 1 2 17" stroke="#7a6436" stroke-width="1.500" stroke-dasharray="4 2"/><use href="#eye" x="8" y="11" width="10" height="6"/></svg></button>
                        <button aria-label="Point display"><svg viewBox="0 0 18 18"><path d="M3 1l4 4m0-4L3 5M11 3l4 4m0-4-4 4M1 9l4 4m0-4-4 4" stroke="#7a6436" stroke-width="1.500"/><use href="#eye" x="8" y="11" width="10" height="6"/></svg></button>
                        <button aria-label="Csys display"><svg viewBox="0 0 18 18"><path d="M7 1v9h9M7 10l-5 5M5 3l2-2 2 2M14 8l2 2M2 12v3h3" fill="none" stroke="#7a6436" stroke-width="1.300"/><use href="#eye" x="8" y="11" width="10" height="6"/></svg></button>
                    </div>

                    <svg class="drawing" viewBox="449 166 1397 808">
                        <defs>
                            <marker id="arrow" viewBox="0 0 8 4" refX="8" refY="2" markerWidth="7" markerHeight="4" markerUnits="userSpaceOnUse" orient="auto-start-reverse"><path d="M0 0l8 2-8 2z" fill="#2a0a50"/></marker>
                            <linearGradient id="outerRed" x1="0" y1="0" x2="1" y2="0"><stop offset="0" stop-color="#a80000"/><stop offset=".28" stop-color="#f00"/><stop offset="1" stop-color="#f00"/></linearGradient>
                            <linearGradient id="innerRed" x1="0" y1="0" x2="1" y2="1"><stop offset=".2" stop-color="#b80000"/><stop offset=".42" stop-color="#f00"/><stop offset=".8" stop-color="#f00"/><stop offset="1" stop-color="#a00000"/></linearGradient>
                        </defs>

                        <!-- sheet border -->
                        <path class="paper" d="M669.500 231.500h957v676h-957z"/>
                        <path class="solid" d="M670 232h22v11h-11v11h-11zM1604 232h22v22h-10v-12h-12zM670 907h22v-11h-11v-11h-11zM1626 885v22h-22v-11h12v-11z"/>
                        <path class="frame" d="M703.500 242.500h912v654h-912zM714.500 254.500h889v631h-889zM806.500 243v11M920.500 243v11M1034.500 243v11M1148.500 232v32M1262.500 243v11M1376.500 243v11M1490.500 243v11M806.500 886v11M920.500 886v11M1034.500 886v11M1148.500 876v31M1262.500 886v11M1376.500 886v11M1490.500 886v11M704 342.500h10M704 456.500h10M704 570.500h22M704 684.500h10M704 798.500h10M1604 342.500h11M1604 456.500h11M1593 570.500h22M1604 684.500h11M1604 798.500h11"/>
                        <path class="ink" d="M703.500 242v655M1615.500 242v655"/>
                        <g class="zone">
                            <text x="749" y="252">1</text><text x="863" y="252">2</text><text x="977" y="252">3</text><text x="1091" y="252">4</text><text x="1205" y="252">5</text><text x="1319" y="252">6</text><text x="1433" y="252">7</text><text x="1547" y="252">8</text>
                            <text x="749" y="895">1</text><text x="863" y="895">2</text><text x="977" y="895">3</text><text x="1091" y="895">4</text><text x="1205" y="895">5</text><text x="1319" y="895">6</text><text x="1433" y="895">7</text><text x="1547" y="895">8</text>
                            <text x="709" y="287">A</text><text x="709" y="401">B</text><text x="709" y="515">C</text><text x="709" y="629">D</text><text x="709" y="743">E</text><text x="709" y="857">F</text>
                            <text x="1609" y="287">A</text><text x="1609" y="401">B</text><text x="1609" y="515">C</text><text x="1609" y="629">D</text><text x="1609" y="743">E</text><text x="1609" y="857">F</text>
                        </g>

                        <!-- front view -->
                        <path class="edge" d="M895.500 367.500h-57v102h228v-102h-57M838.500 424.500h228M895.500 367.500a57 57 0 0 1 114 0"/>
                        <circle class="edge" cx="952.500" cy="367.500" r="45.500"/>
                        <path class="axis" d="M952.500 310v46M952.500 379v52M895 367.500h46M964 367.500h46M950 365l5 5m0-5-5 5"/>
                        <path class="ext" d="M838.500 284v77M952.500 284v26M1073 367.500h49M1073 424.500h26M1073 469.500h49M838.500 476v30M1066.500 476v30"/>
                        <path class="dim" d="M839 288.500h113"/>
                        <path class="dim" d="M1117.500 368v101"/>
                        <path class="dim" d="M1094.500 425v44"/>
                        <path class="dim" d="M839 502.500h227"/>
                        <path class="leader" d="M997 277 979 316"/>
                        <path class="leader both" d="M922.500 401 982.500 334"/>
                        <path class="ext" d="M982.500 334 1017 296"/>
                        <g class="note">
                            <text x="887" y="286">50</text>
                            <text x="947" y="500">100</text>
                            <text transform="translate(1115 412) rotate(-90)">45</text>
                            <text transform="translate(1092 450) rotate(-90)">20</text>
                            <text transform="translate(991 284) rotate(-65)">R25</text>
                            <text transform="translate(1009 302) rotate(-48)">⌀40</text>
                        </g>

                        <!-- left view -->
                        <path class="edge" d="M1287.500 310.500h46v114h91v45h-137z"/>
                        <path class="axis" d="M1285 367.500h55"/>
                        <path class="ext" d="M1287.500 282v22M1333.500 282v22M1233 310.500h48M1233 469.500h48M1255 367.500h30M1430 424.500h24M1430 469.500h24M1287.500 476v27M1424.500 476v27"/>
                        <path class="dim" d="M1288 286.500h45"/>
                        <path class="dim" d="M1237.500 311v158"/>
                        <path class="dim" d="M1260.500 368v101"/>
                        <path class="dim" d="M1450.500 425v44"/>
                        <path class="dim" d="M1288 498.500h136"/>
                        <g class="note">
                            <text x="1310" y="284">20</text>
                            <text x="1365" y="496">60</text>
                            <text transform="translate(1235 384) rotate(-90)">70</text>
                            <text transform="translate(1258 418) rotate(-90)">45</text>
                            <text transform="translate(1448 446) rotate(-90)">20</text>
                        </g>

                        <!-- top view -->
                        <path class="edge" d="M838.500 643.500h228v136h-228zM838.500 688.500h228M895.500 643v45M1009.500 643v45"/>
                        <path class="axis" d="M952.500 637v60"/>
                        <path class="ext" d="M838.500 609v28M895.500 609v28M1009.500 609v28M804 688.500h28M776 643.500h56M776 779.500h56M838.500 786v28M1066.500 786v28"/>
                        <path class="dim" d="M839 615.500h56"/>
                        <path class="dim" d="M896 614.500h113"/>
                        <path class="dim" d="M809.500 644v44"/>
                        <path class="dim" d="M781.500 644v135"/>
                        <path class="dim" d="M839 809.500h227"/>
                        <g class="note">
                            <text x="869" y="613">25</text>
                            <text x="943" y="612">⌀50</text>
                            <text x="954" y="807">100</text>
                            <text transform="translate(808 663) rotate(-90)">20</text>
                            <text transform="translate(779 704) rotate(-90)">60</text>
                        </g>

                        <!-- shaded isometric view -->
                        <g class="solid-model">
                            <path class="light" d="M1261 566l27-19 29 6-10 23z"/>
                            <path class="dark" d="M1261 566l180 38 6 51-179-38z"/>
                            <path class="light" d="M1214 656l54-39 179 38-54 38z"/>
                            <path class="dark" d="M1214 656l179 37 6 41-179-38z"/>
                            <path class="mid" d="M1393 693l54-38-6-51 26-19 15 91-83 58z"/>
                            <g transform="matrix(1.797 .379 .283 2.050 1350.850 584.750)">
                                <path fill="url(#outerRed)" d="M-14.800-20.200 2-32.500A25 25 0 0 1 41.800-12.300L25 0A25 25 0 0 0-14.800-20.200z"/>
                                <path class="dark-face" d="M-25 0A25 25 0 0 1 25 0L22 3H-22z"/>
                                <path class="outline" d="M-25 0A25 25 0 0 1 25 0"/>
                                <circle r="20" fill="url(#innerRed)"/>
                                <path class="gap" d="M-1.700-19.950A20 20 0 0 1 18.500 7.650 20 20 0 0 1-1.700-19.950z"/>
                            </g>
                            <path class="light" d="M1395 594l27-19 45 10-26 19z"/>
                        </g>
                        <text class="caption" x="1265" y="739">Isometric View</text>

                        <!-- title block -->
                        <path class="ink" d="M1193.500 885V756.500H1604M1193 833.500h411M1193 777.500h137M1193 796.500h137M1193 821.500h267M1193 851.500h137M1330.500 756v129M1460.500 756v129M1330 803.500h130M1460 792.500h144M1460 812.500h144M1460 853.500h144"/>
                        <path class="frame" d="M1241.500 834v17M1262.500 852v33M1532.500 793v40M1543.500 854v31M1577.500 854v31"/>
                        <g class="fine">
                            <text x="1196" y="762">Material:</text>
                            <text x="1196" y="783">Finish:</text>
                            <text x="1196" y="802">Unless Otherwise Stated:</text>
                            <text x="1196" y="808">Linear Tol. ±0.2 Angular Tol. 0°15'</text>
                            <text x="1196" y="813">Surface Finish: 0.8µm</text>
                            <text x="1196" y="819">All Dimensions: mm</text>
                            <text x="1196" y="827">Drawing Scale:</text>
                            <text x="1198" y="840">Approx Weight:</text>
                            <text x="1260" y="841">Drawing Produced In</text>
                            <text x="1253" y="847">Accordance With: BS8888</text>
                            <text x="1196" y="858">Projection Method:</text>
                            <text x="1208" y="864">FIRST ANGLE</text>
                            <text x="1266" y="857">Sheet Size:</text>
                            <text x="1333" y="763">This drawing and any information or</text>
                            <text x="1333" y="769">description material set out on it</text>
                            <text x="1333" y="775">are the confidential and copyright property</text>
                            <text x="1333" y="780">of Emilian Popa ® and MUST NOT BE</text>
                            <text x="1333" y="786">DISCLOSED, COPIED, LOANED in whole or part</text>
                            <text x="1333" y="791">or used for any purpose without the</text>
                            <text x="1333" y="797">written permission ©Emilian Popa .</text>
                            <text x="1333" y="809">Document Type:</text>
                            <text x="1334" y="839">Legal Owner:</text>
                            <text x="1344" y="872">B-dul Decebal nr 93 Bl 012 sc 1 ap 10</text>
                            <text x="1463" y="763">Description:</text>
                            <text x="1463" y="799">Drawn by:</text>
                            <text x="1535" y="799">Drawn Date:</text>
                            <text x="1463" y="819">Checked/Approved by:</text>
                            <text x="1535" y="819">Checked/Approved Date:</text>
                            <text x="1464" y="839">Part Number:</text>
                            <text x="1464" y="859">Drawing Number:</text>
                            <text x="1547" y="859">Sheet:</text>
                            <text x="1580" y="859">Revision:</text>
                        </g>
                        <g class="medium">
                            <text x="1257" y="830">1:1</text>
                            <text x="1334" y="830">Emilian Popa Confidential</text>
                            <text x="1223" y="849">Kg</text>
                            <text x="1550" y="876">1 of 1</text>
                        </g>
                        <g class="note">
                            <text x="1243" y="773">S235JR</text>
                            <text x="1530" y="782">Exercise - 03</text>
                            <text x="1536" y="847">100-00-003</text>
                            <text x="1502" y="875">100-00-003</text>
                            <text x="1590" y="879">A</text>
                            <text class="dark-text" x="1374" y="860">Emilian Popa</text>
                            <text class="large" x="1294" y="877">A3</text>
                        </g>
                        <path class="ink" d="M1216 872.500l12-2v9l-12-2zM1213 875.500h34M1239.500 869v13"/>
                        <circle class="ink" cx="1239.500" cy="875.500" r="5"/><circle class="ink" cx="1239.500" cy="875.500" r="2.500"/>
                    </svg>
                    <div class="sheet-info"><span>SCALE : 1:1</span><span>TYPE : PART</span><span>NAME : EXERCISE-03</span><span>SIZE : A3</span></div>
                </div>
                <div class="sheetbar">
                    <button aria-label="First sheet"><svg width="11" height="8" viewBox="0 0 11 8"><path d="M5 0v8L0 4zM11 0v8L6 4z" fill="#444"/></svg></button>
                    <button aria-label="Previous sheet" disabled><svg width="11" height="8" viewBox="0 0 11 8"><path d="M8 0v8L3 4z" fill="#aaa"/></svg></button>
                    <button aria-label="Next sheet" disabled><svg width="11" height="8" viewBox="0 0 11 8"><path d="M3 0v8l5-4z" fill="#aaa"/></svg></button>
                    <button aria-label="Last sheet"><svg width="11" height="8" viewBox="0 0 11 8"><path d="M0 0v8l5-4zM6 0v8l5-4z" fill="#444"/></svg></button>
                    <button class="add" aria-label="Add sheet"><svg width="7" height="7" viewBox="0 0 7 7"><path d="M0 3.500h7M3.500 0v7" stroke="#333" stroke-width="1.400"/></svg></button>
                    <button class="sheet-tab">Sheet 1</button>
                </div>
            </div>
        </main>

        <footer class="status">
            <button class="pressed" aria-label="Navigator"><svg width="12" height="18"><use href="#treeicon"/></svg></button>
            <button aria-label="Browser"><svg width="17" height="17" viewBox="0 0 17 17"><circle cx="8.500" cy="8.500" r="6.500" fill="#4aaede"/><path d="M5 4l4-1 1 3-3 3-3-2zM9 9l4-1-2 6-2-1z" fill="#c9ecfa"/><ellipse cx="8.500" cy="8.500" rx="9" ry="4" fill="none" stroke="#33668c" transform="rotate(-50 8.500 8.500)"/></svg></button>
            <button aria-label="Full screen"><svg width="16" height="16" viewBox="0 0 16 16"><path d="M.5.5h15v15H.5z" fill="#d7eaf4" stroke="#3f6a85"/><path d="M1 1h14v6H1z" fill="#f1f9fc"/></svg></button>
            <span class="rule"></span>
            <div class="status-right">
                <div class="lights"><svg width="26" height="12" viewBox="0 0 26 12"><circle cx="6" cy="6" r="5" fill="#4cd445"/><circle cx="16" cy="6" r="3" fill="#c9c9c9"/><circle cx="23" cy="6" r="3" fill="#c9c9c9"/></svg></div>
                <div class="finder"><button aria-label="Find"><svg width="18" height="16" viewBox="0 0 18 16"><path d="M4 1h3v3h4V1h3l3 10v4h-6v-4H7v4H1v-4z" fill="#444"/><path d="M4 5l-2 7M12 5l1 7" stroke="#aaa" stroke-width="1.500"/></svg></button><button aria-label="Find options"><svg class="caret"><use href="#caret"/></svg></button></div>
                <label class="filter"><select aria-label="Selection filter"><option>General</option></select><span><svg class="caret"><use href="#caret"/></svg></span></label>
                <svg class="grip" width="12" height="12" viewBox="0 0 12 12"><path d="M0 11 11 0M4 11l7-7M8 11l3-3" stroke="#999"/></svg>
            </div>
        </footer>
    </div>
</body>
</html>
```
FILE: styles.css
```css
* {
    margin: 0;
    padding: 0;
    box-sizing: border-box;
}

body {
    font-family: "Open Sans", "Noto Sans", sans-serif;
    font-size: 11px;
    line-height: 16px;
    color: #3c3c3c;
    background: #b9b9b9;
}

button {
    font: inherit;
    color: inherit;
    background: none;
    border: none;
    display: flex;
    align-items: center;
    justify-content: center;
    white-space: nowrap;
}

button:disabled {
    color: #a8a8a8;
}

svg {
    flex: none;
}

.sprite {
    position: absolute;
    width: 0;
    height: 0;
}

.caret {
    width: 7px;
    height: 5px;
    color: #555;
}

button:disabled .caret {
    color: #a8a8a8;
}

.window {
    height: 100vh;
    padding: 4px;
    display: flex;
    flex-direction: column;
}

/* title bar */
.titlebar {
    height: 28px;
    background: #fcfbfd;
    display: grid;
    grid-template-columns: 1fr auto 1fr;
    grid-template-rows: 28px;
    align-items: center;
}

.brand {
    grid-column: 1;
    grid-row: 1;
    display: flex;
    align-items: center;
    gap: 7px;
    padding-left: 12px;
    height: 24px;
    width: 87px;
    border-right: 1px solid #ccc;
}

.brand span {
    font-family: Lato, sans-serif;
    font-size: 19px;
    line-height: 20px;
    padding-bottom: 3px;
    color: #555;
}

.brand sup {
    font-size: 5px;
    line-height: 5px;
    vertical-align: 8px;
}

.quick {
    grid-column: 1;
    grid-row: 1;
    padding-left: 92px;
    display: flex;
    align-items: center;
    gap: 4px;
}

.quick button {
    width: 20px;
    height: 22px;
}

.quick .drop {
    width: 10px;
}

.split {
    display: flex;
    gap: 2px;
}

.picker {
    display: flex;
    background: #dedede;
    border: 1px solid #aaa;
}

.quick .picker button {
    width: 22px;
}

.quick .picker .drop {
    width: 14px;
    border-left: 1px solid #aaa;
}

.quick .customize {
    border-left: 1px solid #ccc;
    width: 24px;
}

.titlebar h1 {
    grid-column: 2;
    grid-row: 1;
    font-size: 13px;
    font-weight: normal;
}

.window-buttons {
    grid-column: 3;
    grid-row: 1;
    display: flex;
    justify-content: flex-end;
    gap: 17px;
    padding-right: 11px;
}

/* ribbon tabs */
.tabs {
    height: 27px;
    background: #3c4545;
    display: flex;
    color: #f4f4f4;
    font-size: 13px;
}

.tabs > button {
    padding: 1px 22px 0 23px;
}

.tabs > .active ~ button {
    padding: 1px 22px 0;
}

.tabs .file {
    padding: 1px 18px 0;
    background: linear-gradient(#62cc45, #4bb02f);
}

.tabs .active {
    background: #fff;
    color: #41862f;
}

.tab-tools {
    margin-left: auto;
    padding: 0 6px 3px 0;
    display: flex;
    align-items: center;
    gap: 10px;
}

.tab-tools b {
    width: 12px;
    font-size: 14px;
}

/* ribbon */
.ribbon {
    height: 107px;
    background: #fff;
    border-bottom: 1px solid #a5aaaa;
    display: flex;
    padding-top: 1px;
    font-family: "Noto Sans", "Open Sans", sans-serif;
}

.group {
    border-right: 1px solid #c4c8c8;
    display: flex;
    flex-direction: column;
    margin-bottom: 2px;
}

.group-body {
    display: grid;
    height: 83px;
}

.group-delete .group-body {
    grid-template-columns: 131px;
}

.group-group .group-body {
    grid-template-columns: 45px 40px 117px;
}

.group-annotations .group-body {
    grid-template-columns: 82px 76px 54px 149px 149px 138px;
}

.group-edit .group-body {
    grid-template-columns: 74px 110px 73px 142px;
}

.group-format .group-body {
    grid-template-columns: 43px 43px 140px;
}

.group-name {
    align-self: center;
    height: 20px;
    display: flex;
    align-items: center;
    gap: 4px;
}

.big {
    flex-direction: column;
    justify-content: flex-start;
    padding-top: 5px;
    line-height: 15px;
}

.big > svg {
    width: 32px;
    height: 32px;
    margin-bottom: 9px;
}

.divided {
    background: linear-gradient(#c8cccc, #c8cccc) 0 5px / 1px 70px no-repeat;
}

.stack {
    display: flex;
    flex-direction: column;
    padding-left: 7px;
}

.group-edit .stack {
    padding-left: 5px;
}

.group-format .stack {
    padding-left: 11px;
}

.stack button {
    height: 26px;
    justify-content: flex-start;
    gap: 4px;
}

.stack button > svg:first-child {
    width: 16px;
    height: 16px;
}

.stack .caret {
    margin-left: 5px;
}

.big > svg,
.stack button > svg:first-child {
    fill: none;
    stroke: #444;
    overflow: visible;
}

.ribbon button:disabled > svg:first-child {
    stroke: #aaa;
}

.ribbon text {
    fill: #333;
    stroke: none;
}

.ribbon :disabled text {
    fill: #aaa;
}

.ribbon text.serif {
    font-family: "Liberation Serif", serif;
}

.ribbon text.blue {
    fill: #1d84b5;
}

.ribbon text.white {
    fill: #fff;
}

/* navigator */
.workspace {
    flex: 1;
    min-height: 0;
    display: flex;
}

.side {
    width: 445px;
    background: #fdfcfd;
    border-right: 2px solid #e7eaeb;
    display: flex;
    flex-direction: column;
}

.side-tabs {
    height: 30px;
    background: #e7eaeb;
    display: flex;
}

.side-tabs button {
    padding: 0 8px;
    gap: 5px;
}

.side-tabs .active {
    background: #fff;
    padding-left: 11px;
    gap: 6px;
}

.pane {
    flex: 1;
    padding-left: 8px;
}

.side .pane:nth-child(2) {
    flex: 0 0 399px;
}

.pane-head {
    height: 29px;
    margin-right: 5px;
    padding: 0 4px 0 6px;
    background: #fff;
    display: flex;
    align-items: center;
    gap: 10px;
}

.pane + .pane .pane-head {
    border-top: 1px solid #e4e4e6;
    height: 33px;
}

.pane-head h2 {
    font-size: 11px;
    flex: 1;
    margin-left: -4px;
}

.pane-head button {
    gap: 9px;
}

.pane-head button:last-child {
    margin-left: 3px;
}

.tree {
    list-style: none;
    padding-left: 3px;
}

.tree li {
    height: 20px;
    display: flex;
    align-items: center;
}

.tree .deep {
    padding-left: 20px;
}

.tree i {
    width: 20px;
    display: flex;
    justify-content: center;
    margin-right: 1px;
}

.ico {
    width: 16px;
    height: 16px;
    margin-right: 4px;
}

.ico.wide {
    width: 20px;
    height: 17px;
}

.ico.roomy {
    margin-right: 9px;
}

.hidden-item {
    color: #b8b8b8;
}

/* graphics area */
.stage {
    flex: 1;
    min-width: 0;
    display: flex;
    flex-direction: column;
}

.canvas {
    flex: 1;
    min-height: 0;
    position: relative;
    background: #e8e9ed;
    border-bottom: 1px solid #888;
}

.drawing {
    display: block;
    width: 100%;
    height: 100%;
}

.view-tools {
    position: absolute;
    top: 7px;
    left: 50%;
    transform: translateX(-50%);
    height: 32px;
    padding: 0 3px;
    display: flex;
    background: #fff;
    border: 1px solid #b9bcc0;
}

.view-tools button {
    width: 26px;
}

.view-tools svg {
    width: 18px;
    height: 18px;
}

.sheet-info {
    position: absolute;
    left: 17px;
    bottom: 0;
    display: flex;
    gap: 17px;
    font-family: "Liberation Sans", Arial, sans-serif;
    font-size: 12px;
    color: #8c8f98;
}

.sheet-info span:first-child {
    margin-right: 17px;
}

/* drawing line styles */
.drawing path,
.drawing circle {
    vector-effect: non-scaling-stroke;
}

.paper { fill: none; stroke: #25887c; }
.solid { fill: #000; }
.frame { fill: none; stroke: #85878b; }
.ink { fill: none; stroke: #111; }
.edge { fill: none; stroke: #2c5f97; }
.axis { fill: none; stroke: #7a3d4c; stroke-dasharray: 7 2; }
.ext { fill: none; stroke: #3a1c5c; }

.dim {
    fill: none;
    stroke: #4b3a68;
    marker-start: url(#arrow);
    marker-end: url(#arrow);
}

.leader {
    fill: none;
    stroke: #2a0a50;
    marker-end: url(#arrow);
}

.leader.both {
    marker-start: url(#arrow);
}

.drawing text {
    font-family: "Liberation Mono", monospace;
    font-size: 11px;
    fill: #111;
}

.drawing .note text,
.drawing .zone text,
.drawing .caption {
    text-anchor: middle;
}

.drawing .note text,
.drawing .caption {
    fill: #2e1c50;
}

.drawing .zone text {
    font-family: "Open Sans", sans-serif;
    font-size: 9px;
}

.drawing .fine text {
    font-family: "Liberation Sans", Arial, sans-serif;
    font-size: 5px;
    font-weight: bold;
}

.drawing .medium text {
    font-family: "Liberation Sans", Arial, sans-serif;
    font-size: 7px;
}

.drawing .note .large {
    font-size: 14px;
    fill: #111;
}

.drawing .note .dark-text {
    font-size: 9px;
    fill: #111;
}

.solid-model path,
.solid-model circle {
    stroke: #062006;
    stroke-linejoin: round;
}

.light { fill: #00e400; }
.mid { fill: #00bb00; }
.dark { fill: #007c00; }
.gap { fill: #e8e9ed; }
.solid-model .dark-face { fill: #007c00; stroke: none; }
.solid-model .outline { fill: none; }

/* sheet tabs */
.sheetbar {
    height: 24px;
    margin-top: 3px;
    background: #dedede;
    border: 1px solid #888;
    display: flex;
    align-items: center;
    padding-left: 3px;
}

.sheetbar button {
    width: 17px;
    height: 18px;
}

.sheetbar .add {
    width: 20px;
    margin-left: 4px;
    align-self: flex-start;
    border: 1px solid #888;
}

.sheetbar .sheet-tab {
    width: 78px;
    height: 22px;
    padding-bottom: 4px;
    background: #f3f3f3;
    border-right: 1px solid #888;
    font-size: 12px;
    font-weight: 600;
}

/* status bar */
.status {
    height: 34px;
    background: #fff;
    border-top: 1px solid #b5b5b5;
    display: flex;
    align-items: center;
    gap: 8px;
    padding-left: 6px;
}

.status .pressed {
    width: 22px;
    height: 22px;
    background: #e0e0e0;
    border: 1px solid #aaa;
}

.rule {
    height: 26px;
    border-left: 1px solid #ccc;
    margin-left: 4px;
}

.status-right {
    margin-left: auto;
    display: flex;
    align-items: center;
    padding-right: 3px;
}

.lights {
    height: 26px;
    width: 37px;
    display: flex;
    align-items: center;
    justify-content: center;
    border: 1px solid #ccc;
    border-width: 0 1px;
}

.finder {
    display: flex;
    height: 24px;
    padding-right: 2px;
    border-right: 1px solid #ccc;
    margin: 0 90px 0 2px;
}

.finder button {
    width: 28px;
    background: #f8f8f9;
    border: 1px solid #b9b9b9;
}

.finder button + button {
    width: 15px;
    border-left: none;
}

.filter {
    width: 164px;
    height: 23px;
    display: flex;
    background: #f7f7f8;
    border: 1px solid #a5a5a5;
}

.filter select {
    flex: 1;
    appearance: none;
    font: inherit;
    color: inherit;
    background: none;
    border: none;
    padding-left: 8px;
}

.filter span {
    width: 15px;
    display: flex;
    align-items: center;
    justify-content: center;
    border-left: 1px solid #a5a5a5;
}

.grip {
    align-self: flex-end;
    margin-left: 4px;
}
```
